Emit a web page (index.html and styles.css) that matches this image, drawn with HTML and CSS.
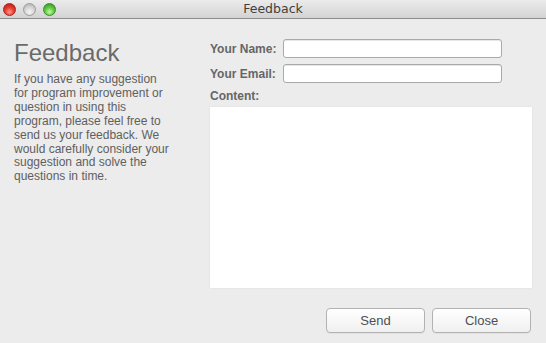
FILE: index.html
```html
<!DOCTYPE html>
<html>
<head>
<meta charset="utf-8">
<title>Feedback</title>
<link rel="stylesheet" href="styles.css">
</head>
<body>
<div class="window">
  <div class="titlebar">
    <div class="lights">
      <span class="light red"></span>
      <span class="light gray"></span>
      <span class="light green"></span>
    </div>
    <div class="title">Feedback</div>
  </div>
  <div class="main">
    <div class="intro">
      <h1 class="heading">Feedback</h1>
      <p class="desc">If you have any suggestion for program improvement or question in using this program, please feel free to send us your feedback. We would carefully consider your suggestion and solve the questions in time.</p>
    </div>
    <div class="form">
      <div class="fields">
        <label class="label">Your Name:</label>
        <input class="field" type="text">
        <label class="label">Your Email:</label>
        <input class="field" type="text">
      </div>
      <div class="label content-label">Content:</div>
      <textarea class="content"></textarea>
      <div class="actions">
        <button class="btn">Send</button>
        <button class="btn">Close</button>
      </div>
    </div>
  </div>
</div>
</body>
</html>
```
FILE: styles.css
```css
html, body {
  margin: 0;
  padding: 0;
  background: #ececec;
}
body {
  width: 546px;
  height: 343px;
  overflow: hidden;
  font-family: "Liberation Sans", Arial, sans-serif;
}
.window {
  display: flex;
  flex-direction: column;
  height: 343px;
}
.titlebar {
  position: relative;
  height: 18px;
  border-bottom: 1px solid #8c8c8c;
  background: linear-gradient(#ebebeb, #d3d3d3);
  display: flex;
  align-items: center;
}
.lights {
  display: flex;
  gap: 7px;
  padding-left: 3px;
}
.light {
  width: 13px;
  height: 13px;
  border-radius: 50%;
  box-sizing: border-box;
}
.light.red {
  background: radial-gradient(circle at 50% 72%, #ff9a8e 0%, #ec3b30 45%, #b5140d 100%);
  border: 1px solid #a4231c;
}
.light.gray {
  background: radial-gradient(circle at 50% 72%, #f6f6f6 0%, #d4d4d4 50%, #a9a9a9 100%);
  border: 1px solid #9c9c9c;
}
.light.green {
  background: radial-gradient(circle at 50% 72%, #c4f8a8 0%, #62cc40 45%, #2e8a1e 100%);
  border: 1px solid #3c8a2c;
}
.title {
  position: absolute;
  left: 0;
  right: 0;
  top: 0;
  line-height: 18px;
  text-align: center;
  font-family: "DejaVu Sans", sans-serif;
  font-size: 12.5px;
  color: #3f3f3f;
}
.main {
  display: flex;
  padding: 20px 14px 0 14px;
}
.intro {
  width: 196px;
  flex: none;
}
.heading {
  margin: 0;
  font-size: 24px;
  line-height: 28px;
  font-weight: normal;
  color: #6a6a6a;
}
.desc {
  margin: 6px 0 0 0;
  width: 158px;
  font-size: 12px;
  line-height: 13.9px;
  color: #606060;
}
.form {
  width: 322px;
  display: flex;
  flex-direction: column;
}
.fields {
  display: grid;
  grid-template-columns: 66px 219px;
  column-gap: 7px;
  row-gap: 6px;
  align-items: center;
}
.label {
  font-size: 12px;
  font-weight: bold;
  color: #666;
  line-height: 14px;
  white-space: nowrap;
}
.field {
  box-sizing: border-box;
  height: 19px;
  width: 219px;
  margin: 0;
  border: 1px solid #a9a9a9;
  border-radius: 3px;
  background: #fff;
  box-shadow: inset 0 1px 0 #e6e6e6;
  outline: none;
}
.content-label {
  margin-top: 6px;
}
.content {
  box-sizing: border-box;
  margin: 4px 0 0 0;
  width: 322px;
  height: 181px;
  border: none;
  background: #fff;
  resize: none;
  outline: none;
  box-shadow: 0 0 2px rgba(0, 0, 0, 0.07);
}
.actions {
  display: flex;
  justify-content: flex-end;
  gap: 7px;
  margin-top: 20px;
  padding-right: 1px;
}
.btn {
  box-sizing: border-box;
  width: 99px;
  height: 25px;
  margin: 0;
  padding: 0;
  border: 1px solid #b2b2b2;
  border-radius: 4px;
  background: linear-gradient(#ffffff, #f0f0f0);
  box-shadow: 0 1px 0 rgba(0, 0, 0, 0.04);
  font-family: "Liberation Sans", Arial, sans-serif;
  font-size: 13px;
  color: #4f4f4f;
}
```
